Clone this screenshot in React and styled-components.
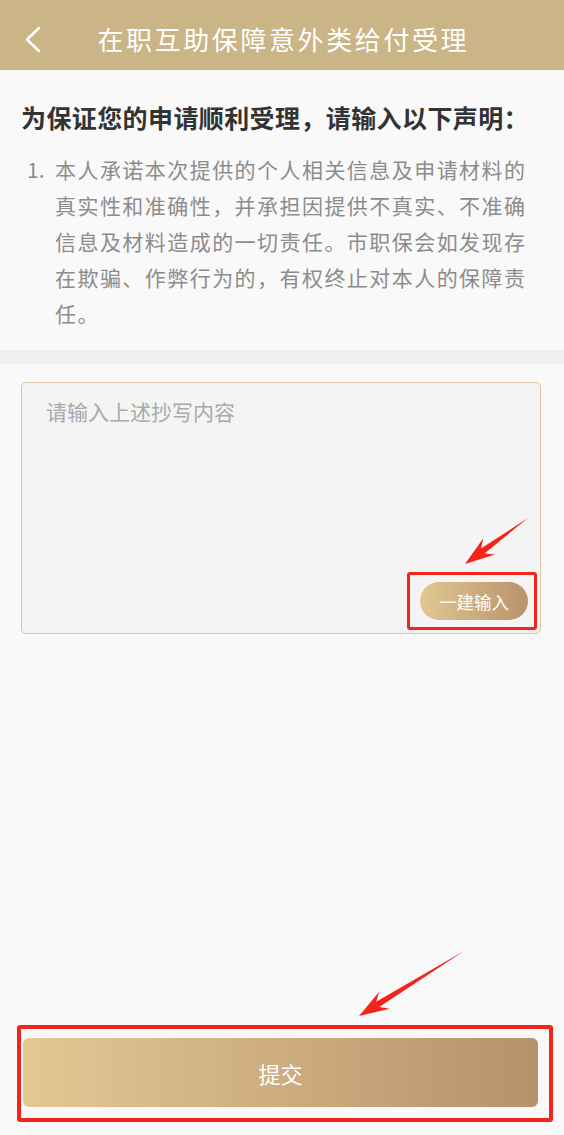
import React from "react";
import styled, { createGlobalStyle } from "styled-components";

const GlobalStyle = createGlobalStyle`
  * {
    box-sizing: border-box;
  }
  body {
    margin: 0;
    background: #f9f9f9;
    font-family: "Noto Sans CJK SC", "Noto Sans", sans-serif;
  }
`;

const Page = styled.div`
  position: relative;
  display: flex;
  flex-direction: column;
  min-height: 1135px;
  background: #f9f9f9;
`;

const Header = styled.div`
  position: relative;
  display: flex;
  align-items: center;
  justify-content: center;
  height: 70px;
  padding-top: 7px;
  background: #cbb486;
`;

const BackButton = styled.div`
  position: absolute;
  left: 24px;
  top: 25px;
  width: 20px;
  height: 30px;
`;

const HeaderTitle = styled.div`
  color: #fff;
  font-size: 26px;
  letter-spacing: 2.6px;
  padding-left: 2.6px;
  line-height: 1;
`;

const Statement = styled.div`
  padding: 30px 20px 11px 20px;
`;

const Heading = styled.div`
  font-size: 25px;
  font-weight: bold;
  letter-spacing: 0.4px;
  color: #333;
  line-height: 34px;
  padding-left: 1px;
`;

const Item = styled.div`
  display: flex;
  margin-top: 17px;
  font-size: 21px;
  line-height: 36px;
  color: #8c8c8c;
`;

const ItemNo = styled.div`
  width: 35px;
  padding-left: 7px;
  flex-shrink: 0;
`;

const ItemText = styled.div`
  width: 476px;
  letter-spacing: 1.45px;
`;

const Divider = styled.div`
  height: 14px;
  background: #efefef;
  margin-top: 8px;
`;

const InputBox = styled.div`
  position: relative;
  margin: 18px 0 0 21px;
  width: 520px;
  height: 252px;
  border: 1.5px solid #d9c5a1;
  border-radius: 5px;
  background: #f4f4f4;
`;

const TextArea = styled.textarea`
  display: block;
  width: 100%;
  height: 190px;
  padding: 13px 24px;
  border: none;
  background: transparent;
  resize: none;
  outline: none;
  font-family: inherit;
  font-size: 21px;
  line-height: 30px;
  color: #333;

  &::placeholder {
    color: #a9a9a9;
  }
`;

const FillButton = styled.div`
  position: absolute;
  right: 12px;
  bottom: 13px;
  width: 108px;
  height: 38px;
  border-radius: 19px;
  background: linear-gradient(90deg, #e1c793 0%, #b8936b 100%);
  color: #fff;
  font-size: 17.5px;
  display: flex;
  align-items: center;
  justify-content: center;
`;

const Highlight = styled.div`
  position: absolute;
  border: ${(p) => p.$w}px solid #f2241b;
  border-radius: 3px;
  pointer-events: none;
`;

const Footer = styled.div`
  margin-top: auto;
  padding: 0 26px 28px 23px;
`;

const SubmitWrap = styled.div`
  position: relative;
`;

const SubmitButton = styled.div`
  height: 69px;
  border-radius: 6px;
  background: linear-gradient(90deg, #e3c893 0%, #b7916b 100%);
  color: #fff;
  font-size: 22px;
  display: flex;
  align-items: center;
  justify-content: center;
`;

const Arrow = styled.svg`
  position: absolute;
  left: 0;
  top: 0;
  pointer-events: none;
`;

const RedArrow = ({ tail, tip }) => {
  const [tx, ty] = tail;
  const [px, py] = tip;
  const dx = px - tx;
  const dy = py - ty;
  const len = Math.hypot(dx, dy);
  const ux = dx / len;
  const uy = dy / len;
  const nx = -uy;
  const ny = ux;
  const headLen = 30;
  const headW = 10;
  const bx = px - ux * headLen;
  const by = py - uy * headLen;
  const sx = px - ux * (headLen - 8);
  const sy = py - uy * (headLen - 8);
  const pts = [
    [tx, ty],
    [sx + nx * 3, sy + ny * 3],
    [bx + nx * headW, by + ny * headW],
    [px, py],
    [bx - nx * headW, by - ny * headW],
    [sx - nx * 3, sy - ny * 3],
  ];
  return <polygon points={pts.map((p) => p.join(",")).join(" ")} fill="#f2241b" />;
};

export default function App() {
  return (
    <>
      <GlobalStyle />
      <Page>
        <Header>
          <BackButton>
            <svg width="20" height="30" viewBox="0 0 20 30">
              <polyline
                points="15,3 3,14.5 15,26"
                fill="none"
                stroke="#fff"
                strokeWidth="2.6"
                strokeLinecap="round"
                strokeLinejoin="round"
              />
            </svg>
          </BackButton>
          <HeaderTitle>在职互助保障意外类给付受理</HeaderTitle>
        </Header>

        <Statement>
          <Heading>为保证您的申请顺利受理，请输入以下声明：</Heading>
          <Item>
            <ItemNo>1.</ItemNo>
            <ItemText>
              本人承诺本次提供的个人相关信息及申请材料的真实性和准确性，并承担因提供不真实、不准确信息及材料造成的一切责任。市职保会如发现存在欺骗、作弊行为的，有权终止对本人的保障责任。
            </ItemText>
          </Item>
        </Statement>

        <Divider />

        <InputBox>
          <TextArea placeholder="请输入上述抄写内容" />
          <FillButton>一建输入</FillButton>
          <Highlight $w={3} style={{ right: 3, bottom: 3, width: 130, height: 58 }} />
        </InputBox>

        <Footer>
          <SubmitWrap>
            <SubmitButton>提交</SubmitButton>
            <Highlight $w={4} style={{ left: -6, right: -15, top: -13, bottom: -15 }} />
          </SubmitWrap>
        </Footer>

        <Arrow width="564" height="1135" viewBox="0 0 564 1135">
          <RedArrow tail={[528, 518]} tip={[465, 564]} />
          <RedArrow tail={[464, 951]} tip={[359, 1016]} />
        </Arrow>
      </Page>
    </>
  );
}
